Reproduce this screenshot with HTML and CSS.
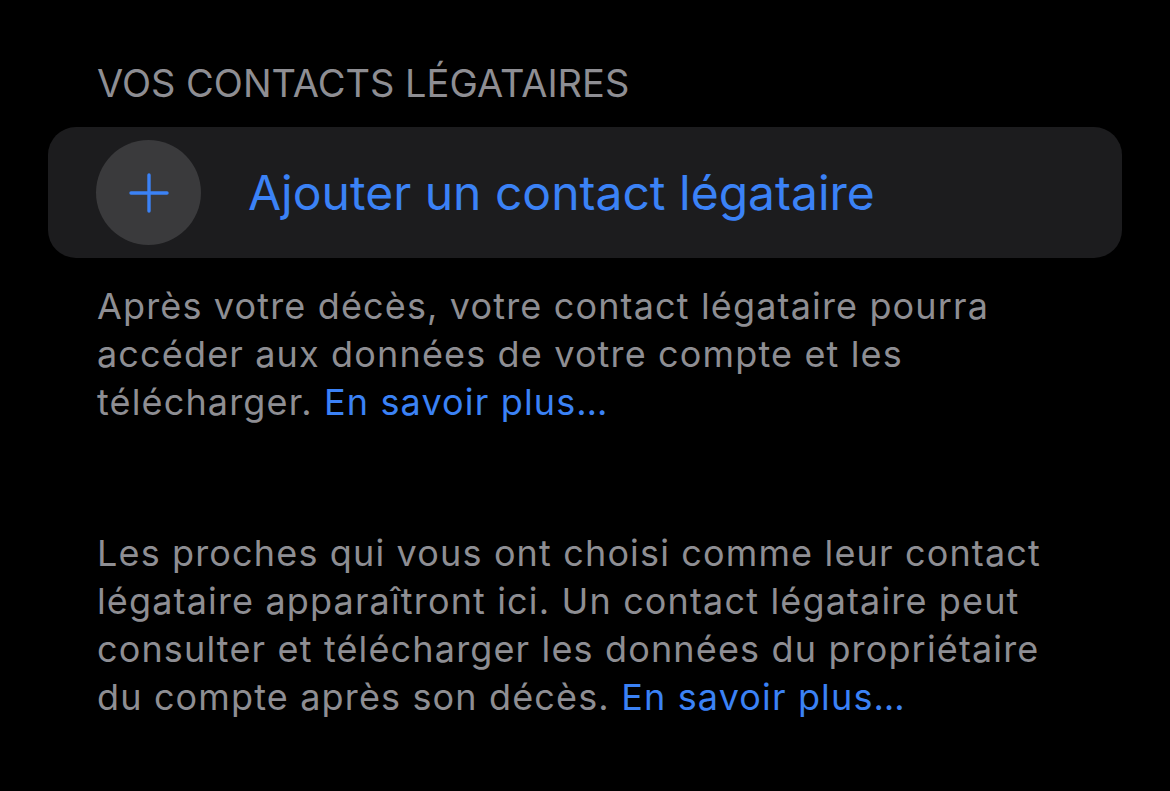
FILE: index.html
```html
<!DOCTYPE html>
<html lang="fr">
<head>
<meta charset="utf-8" />
<title>Contacts légataires</title>
<link rel="stylesheet" href="styles.css">
</head>
<body>
<div class="group">
	<p class="group-title">VOS CONTACTS LÉGATAIRES</p>
	<div class="card">
		<a class="add-row" href="#">
			<span class="add-icon">
				<svg width="40" height="40" viewBox="0 0 40 40"><path d="M20 2V38M2 20H38" stroke="#3b82f6" stroke-width="3.4" stroke-linecap="round" fill="none"/></svg>
			</span>
			<span class="add-label">Ajouter un contact légataire</span>
		</a>
	</div>
	<p class="group-note">Après votre décès, votre contact légataire pourra<br>accéder aux données de votre compte et les<br>télécharger. <a href="#">En savoir plus…</a></p>
</div>

<div class="group group-owners">
	<p class="group-note">Les proches qui vous ont choisi comme leur contact<br>légataire apparaîtront ici. Un contact légataire peut<br>consulter et télécharger les données du propriétaire<br>du compte après son décès. <a href="#">En savoir plus…</a></p>
</div>
</body>
</html>
```

FILE: styles.css
```css
body{margin:0;background:#000;font-family:Inter, "Noto Sans", sans-serif;}
p{margin:0;}
a{text-decoration:none;color:#3b82f6;}

.group{padding:0 48px;}
.group-title{padding:61px 0 0 49px;height:66px;font-size:38px;line-height:44px;color:#8e8e93;white-space:nowrap;}
.card{background:#1c1c1e;border-radius:28px;height:131px;display:flex;align-items:center;padding:0 48px;}
.add-row{display:flex;align-items:center;gap:47px;}
.add-icon{width:105px;height:105px;border-radius:50%;background:#3a3a3c;display:flex;align-items:center;justify-content:center;}
.add-label{font-size:48px;color:#3b82f6;}
.group-note{padding:24px 0 0 49px;font-size:36px;line-height:48px;letter-spacing:1.15px;color:#8e8e93;white-space:nowrap;}
.group-owners .group-note{padding-top:103px;}
```
